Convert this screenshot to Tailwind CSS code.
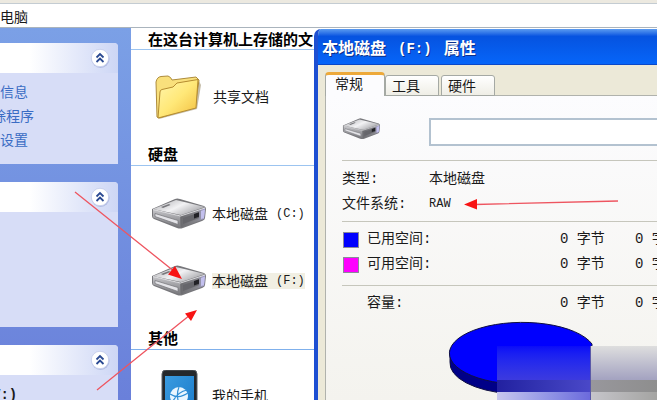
<!DOCTYPE html>
<html lang="zh-CN">
<head>
<meta charset="utf-8">
<meta name="viewport" content="width=device-width, initial-scale=1">
<title>我的电脑</title>
<script src="https://cdn.jsdelivr.net/npm/@tailwindcss/browser@4"></script>
</head>
<body class="relative flex h-screen flex-col overflow-hidden bg-white font-['Liberation_Sans','Noto_Sans_CJK_SC',sans-serif] text-sm text-[#1a1a1a]">
<svg class="absolute size-0" aria-hidden="true">
  <defs>
    <linearGradient id="dTop" x1="0" y1="0" x2="1" y2="0.6"><stop offset="0" stop-color="#a8a8ac"/><stop offset=".55" stop-color="#f2f2f4"/><stop offset="1" stop-color="#a8a8ac"/></linearGradient>
    <linearGradient id="dL" x1="0" y1="0" x2="0" y2="1"><stop offset="0" stop-color="#c6c6ca"/><stop offset="1" stop-color="#77777b"/></linearGradient>
    <linearGradient id="dR" x1="0" y1="0" x2="1" y2="0"><stop offset="0" stop-color="#6c6c70"/><stop offset=".7" stop-color="#88888e"/><stop offset="1" stop-color="#a9a5d6"/></linearGradient>
    <linearGradient id="fold" x1="0" y1="0" x2="1" y2="1"><stop offset="0" stop-color="#fff6ae"/><stop offset=".5" stop-color="#ffe878"/><stop offset="1" stop-color="#f2bd3c"/></linearGradient>
    <linearGradient id="scr" x1="0" y1="0" x2="1" y2="1"><stop offset="0" stop-color="#3a9be0"/><stop offset="1" stop-color="#1778c8"/></linearGradient>
    <symbol id="drive" viewBox="0 0 56 32">
      <path d="M1 11 L24 1 Q26 0 29 1 L53 8 Q55 9 55 11 L54 20 Q54 22 51 23 L32 30 Q29 31 26 30 L3 21 Q1 20 1 18 Z" fill="#77777b"/>
      <path d="M2 11 L25 2 L54 9 L30 17 Z" fill="url(#dTop)"/>
      <path d="M2 11.500 L29 18 V29.500 L2 19.500 Z" fill="url(#dL)"/>
      <path d="M30 18 L54 10 L53 21 L30 29.500 Z" fill="url(#dR)"/>
      <path d="M4 15.500 L27 22.500 V26.500 L4 18.500 Z" fill="#e4e4e8" stroke="#747478" stroke-width=".7"/>
      <path d="M32 20 L48 14.500 V20 L32 26 Z" fill="#66666b"/>
      <path d="M43 16 L48 14.300 V18.800 L43 20.500 Z" fill="#222226"/>
      <path d="M50 13 L54 11.500 L53 20 L50 21 Z" fill="#c3c0ee"/>
      <path d="M10 9 L18 6 L19.500 7 L12 10 Z" fill="#77777b"/>
      <path d="M2 11.500 L29.500 18 L54 10" fill="none" stroke="#f0f0f2" stroke-width=".8"/>
    </symbol>
    <symbol id="chev" viewBox="0 0 20 20">
      <circle cx="10.500" cy="11" r="9" fill="#8d9bd0" opacity=".5"/>
      <circle cx="10" cy="10" r="8.700" fill="#fff" stroke="#c3cbea" stroke-width=".8"/>
      <path d="M6.500 9.500 L10 6 L13.500 9.500 M6.500 14 L10 10.500 L13.500 14" fill="none" stroke="#2b4a92" stroke-width="1.800"/>
    </symbol>
  </defs>
</svg>

<header class="flex h-7 shrink-0 items-center border-t-3 border-b border-t-[#ece9e0] border-b-[#aab4bd] bg-white pt-1 shadow-[inset_0_1px_0_#c4ccd2]">
  <span class="text-[14px]">电脑</span>
</header>

<div class="flex min-h-0 flex-1">
  <aside class="flex w-[131px] shrink-0 flex-col gap-[18px] overflow-hidden bg-linear-to-b from-[#7ba0e6] to-[#6a80da] pt-[15px] pr-[13px]">
    <section class="shrink-0 overflow-hidden rounded-tr-[4px] bg-[#d7ddf7]">
      <div class="flex h-[30px] items-center justify-end bg-linear-to-r from-white from-25% to-[#cdd6f5] pr-2">
        <button aria-label="折叠" class="size-5"><svg class="size-5"><use href="#chev"/></svg></button>
      </div>
      <nav class="flex flex-col pt-[7px] pb-3 text-[14px] leading-6 text-[#3a6cc4]">
        <a href="#">信息</a>
        <a href="#" class="-ml-2">除程序</a>
        <a href="#">设置</a>
      </nav>
    </section>
    <section class="shrink-0 overflow-hidden rounded-tr-[4px] bg-[#d7ddf7]">
      <div class="flex h-[30px] items-center justify-end bg-linear-to-r from-white from-25% to-[#cdd6f5] pr-2">
        <button aria-label="折叠" class="size-5"><svg class="size-5"><use href="#chev"/></svg></button>
      </div>
      <div class="h-[115px]"></div>
    </section>
    <section class="shrink-0 overflow-hidden rounded-tr-[4px] bg-[#d7ddf7]">
      <div class="flex h-[30px] items-center justify-end bg-linear-to-r from-white from-25% to-[#cdd6f5] pr-2">
        <button aria-label="折叠" class="size-5"><svg class="size-5"><use href="#chev"/></svg></button>
      </div>
      <p class="-ml-2 pt-2 font-['Liberation_Mono',monospace] text-[14px] leading-6 font-bold">V:)</p>
    </section>
  </aside>

  <main class="min-w-0 flex-1 overflow-hidden bg-white">
    <h2 class="h-[22px] overflow-hidden border-b border-[#9cc4f0] pl-[17px] text-[15px] leading-6 font-bold whitespace-nowrap text-black">在这台计算机上存储的文</h2>
    <div class="flex h-[94px] items-center gap-3 pl-6">
      <svg class="h-12 w-[46px]" viewBox="0 0 46 48">
        <path d="M4 46 L42 36 L46 12 L44 8 Z" fill="#8a7a52" opacity=".5"/>
        <path d="M2 44 L1 9 Q2 4 6 3.500 L13 3 Q16 4 17 7 L41 4 L44 7 L40 34 L4 45 Z" fill="#f9e07c" stroke="#ae8c3c"/>
        <path d="M3 45 L5 19 Q5 17 7 16.500 L18 14 L22 10 L43 6.500 L41 35 Z" fill="url(#fold)" stroke="#b58c30"/>
      </svg>
      <span class="text-[14px]">共享文档</span>
    </div>
    <h2 class="flex h-[22px] items-end border-b border-[#9cc4f0] pl-[17px] text-[15px] leading-5 font-bold text-black">硬盘</h2>
    <div class="flex h-24 items-center pl-5">
      <svg class="mr-[5px] h-8 w-14"><use href="#drive"/></svg>
      <span class="flex items-center gap-2 text-[14px] leading-4">本地磁盘<span class="font-['Liberation_Mono',monospace] text-xs leading-4">(C:)</span></span>
    </div>
    <div class="flex h-[38px] items-center pl-5">
      <svg class="mr-[5px] h-8 w-14"><use href="#drive"/></svg>
      <span class="flex items-center gap-2 bg-[#f1efe3] text-[14px] leading-4">本地磁盘<span class="font-['Liberation_Mono',monospace] text-xs leading-4">(F:)</span></span>
    </div>
    <h2 class="mt-7 flex h-[22px] items-end border-b border-[#7fb0ec] pl-[17px] text-[15px] leading-5 font-bold text-black">其他</h2>
    <div class="flex items-start pt-5 pl-[30px]">
      <svg class="mr-[14px] h-[60px] w-[37px]" viewBox="0 0 37 60">
        <rect x="1" y="0" width="35" height="60" rx="4" fill="#24282c" stroke="#5a6066"/>
        <rect x="4" y="6" width="29" height="48" fill="url(#scr)"/>
        <circle cx="18" cy="26" r="9" fill="#e9f6ff"/>
        <path d="M9 24 Q18 30 28 22 M18 17 Q14 27 20 37 M11 33 Q16 22 26 20" fill="none" stroke="#2f8fd6" stroke-width="1.200"/>
      </svg>
      <span class="pt-4 text-[14px] leading-5">我的手机</span>
    </div>
  </main>
</div>

<section role="dialog" aria-labelledby="dlg" class="absolute top-[29px] right-0 bottom-0 left-[314px] flex flex-col overflow-hidden rounded-tl-[7px] border-l-4 border-[#1d4fd2] bg-[#ece9d8]">
  <div class="flex h-9 shrink-0 items-center bg-linear-to-b from-[#5b9bf0] via-[#0653e0] via-20% to-[#0666fa] pt-1 pl-1 text-white shadow-[inset_0_-1px_0_#0a48c8]">
    <h1 id="dlg" class="flex items-center gap-3 text-[16px] font-bold [text-shadow:1px_1px_0_#0a2f8c]"><span>本地磁盘</span><span class="font-['Liberation_Mono',monospace] text-[14px]">(F:)</span><span>属性</span></h1>
  </div>
  <div role="tablist" class="z-10 -mb-px flex h-[31px] shrink-0 items-end pl-[7px]">
    <button role="tab" aria-selected="true" class="h-[24px] w-[60px] rounded-t-[4px] border-x border-t-3 border-x-[#a5a9a4] border-t-[#eda93a] bg-[#fcfcfe] pr-3 pb-1 text-[14px] leading-4">常规</button>
    <button role="tab" class="h-[21px] w-[54px] rounded-t-[3px] border border-[#a5a9a4] bg-linear-to-b from-white to-[#efeee6] pr-3 text-[14px] leading-4">工具</button>
    <button role="tab" class="ml-[2px] h-[21px] w-[54px] rounded-t-[3px] border border-[#a5a9a4] bg-linear-to-b from-white to-[#efeee6] pr-3 text-[14px] leading-4">硬件</button>
  </div>
  <div role="tabpanel" class="ml-[7px] min-h-0 flex-1 border-t border-l border-[#b0b2ac] bg-linear-to-b from-[#fcfcfe] to-[#f4f3ee] pl-4 font-['Liberation_Mono','Noto_Sans_CJK_SC',monospace]">
    <div class="flex h-[65px] items-start border-b border-[#c6c6bc] pt-[22px]">
      <svg class="h-[22px] w-[39px]"><use href="#drive"/></svg>
      <input aria-label="卷标" class="ml-12 h-7 min-w-0 flex-1 border-y-2 border-l-2 border-[#b3c2d0] bg-white px-2">
    </div>
    <dl class="grid h-[61px] grid-cols-[87px_1fr] content-start border-b border-[#c6c6bc] pt-[6px] text-[14px] leading-[25px]">
      <dt>类型:</dt><dd>本地磁盘</dd>
      <dt>文件系统:</dt><dd class="text-xs leading-[25px]">RAW</dd>
    </dl>
    <div class="grid h-16 grid-cols-[25px_193px_75px_1fr] content-start items-center overflow-hidden border-b border-[#c6c6bc] pt-[5px] text-[14px] leading-[25px] whitespace-nowrap">
      <i class="ml-px size-4 border border-[#8a8a9a] bg-[#0000fe]"></i><span>已用空间:</span><span>0 字节</span><span>0 字节</span>
      <i class="ml-px size-4 border border-[#8a8a9a] bg-[#fe00fe]"></i><span>可用空间:</span><span>0 字节</span><span>0 字节</span>
    </div>
    <div class="grid grid-cols-[25px_193px_75px_1fr] overflow-hidden pt-[5px] text-[14px] leading-[25px] whitespace-nowrap">
      <span></span><span>容量:</span><span>0 字节</span><span>0 字节</span>
    </div>
    <svg class="mt-1 ml-[106px] h-20 w-[150px]" viewBox="448 320 150 80">
      <path d="M450 350 V362 A72 31 0 0 0 591 372 V350 Z" fill="#000088" stroke="#101040"/>
      <path d="M592 344 A73 31 0 1 0 591 364 Z" fill="#0000fe" stroke="#101040"/>
    </svg>
  </div>
</section>

<div class="absolute right-0 bottom-0 left-[497px] flex h-[54px]" aria-hidden="true">
  <div class="flex w-[94px] flex-col border-r border-[#5a58a8]">
    <div class="h-[34px] bg-linear-to-b from-[#0a0af8] to-[#3c3ade]"></div>
    <div class="h-3 bg-linear-to-r from-[#2220a0] to-[#4a48c8]"></div>
    <div class="flex-1 bg-linear-to-r from-[#c8c7ee] to-[#6c6adc]"></div>
  </div>
  <div class="flex flex-1 flex-col">
    <div class="h-[34px] bg-linear-to-b from-[#dedede] to-[#a3a2c0]"></div>
    <div class="h-3 bg-linear-to-r from-[#98979c] to-[#8e8e8e]"></div>
    <div class="flex-1 bg-linear-to-r from-[#c6c5ca] to-[#a4a4a2]"></div>
  </div>
</div>
<svg class="pointer-events-none absolute top-0 left-0 h-[400px] w-[657px]" viewBox="0 0 657 400" aria-hidden="true">
  <g stroke="#ee5560" stroke-width="1.300"><path d="M75 192 L175 272 M97 390 L190 315 M618 201 L475 204.500"/></g>
  <g fill="#f81414"><path d="M182 279 L168 274.500 L175 266 Z M197 310 L191 321 L185 313.500 Z M464 204.500 L477 199 V209.500 Z"/></g>
</svg>
</body>
</html>
